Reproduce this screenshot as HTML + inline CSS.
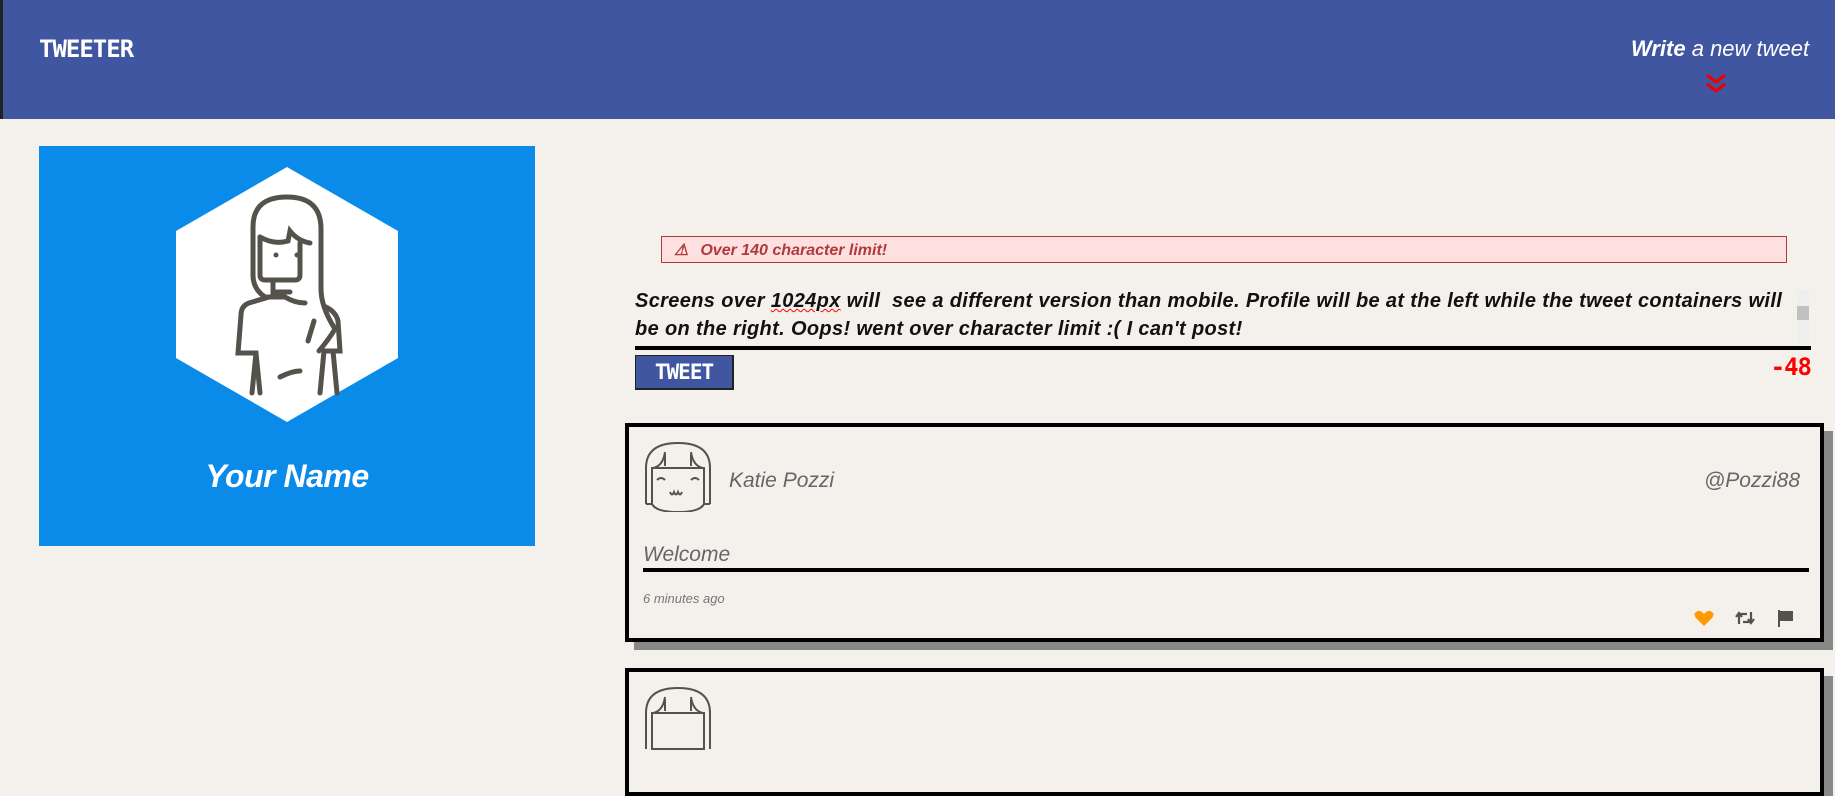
<!DOCTYPE html>
<html><head><meta charset="utf-8"><style>
body{margin:0;width:1835px;height:715px;overflow:hidden;background:#f4f1ec;position:relative;font-family:"Liberation Sans",sans-serif}
.a{position:absolute}
.hdr{left:0;top:0;width:1835px;height:119px;background:#4056a1;border-left:3px solid #222;box-sizing:border-box}
.logo{left:39px;top:35px;color:#fff;font:bold 24px "DejaVu Sans Mono","Liberation Mono",monospace;letter-spacing:-1px}
.write{left:1631px;top:36px;color:#fff;font:italic 22px "Liberation Sans",sans-serif}
.prof{left:39px;top:146px;width:496px;height:400px;background:#0a8be9}
.name{left:39px;top:458px;width:496px;text-align:center;color:#fff;font:italic bold 32px "Liberation Sans",sans-serif;letter-spacing:-0.5px}
.alert{left:661px;top:236px;width:1124px;height:25px;background:#ffe0e1;border:1px solid #b03a3a;color:#b03a3a;font:italic bold 16px "Liberation Sans",sans-serif}
.ta{left:635px;top:287px;width:1168px;color:#111;font:italic bold 20px/28px "Liberation Sans",sans-serif;letter-spacing:0.35px}
.btn{left:635px;top:355px;width:96px;height:32px;background:#4056a1;border:1px solid #222;border-bottom-width:2px;border-right-width:2px;color:#fff;font:bold 21px "DejaVu Sans Mono",monospace;text-align:center;line-height:32px;letter-spacing:-1px}
.card{left:625px;width:1191px;border:4px solid #000;background:#f4f1ec;box-shadow:9px 8px 0 #888}
</style></head><body>
<div class="a hdr"></div>
<div class="a logo">TWEETER</div>
<div class="a write"><b>Write</b> a new tweet</div>
<svg class="a" style="left:1704px;top:72px" width="24" height="24" viewBox="0 0 24 24"><path d="M3 3l9 7 9-7M3 12l9 7 9-7" fill="none" stroke="#e00" stroke-width="3.2"/></svg>

<div class="a prof"></div>
<svg class="a" style="left:176px;top:167px" width="222" height="255" viewBox="0 0 222 255"><polygon points="111,0 222,64 222,191 111,255 0,191 0,64" fill="#fff"/>
<g fill="none" stroke="#55524c" stroke-width="5" stroke-linecap="round">
<path d="M77 108V60q0-30 34-30q34 0 34 32v60q0 18 14 40q-6 10-16 22"/>
<path d="M77 108q0 14 12 22h20q10 6 20 6"/>
<path d="M84 70q14 8 28 4l2-10q8 10 20 12"/>
<path d="M84 70v38q0 5 5 5h30q5 0 5-5V76"/>
<path d="M97 113v12h17"/>
<path d="M93 130l-20 6q-8 3-8 12l-3 38h18l4 40M80 186l-4 40"/>
<path d="M150 140q10 5 12 14l2 30h-16l-4 42M157 184l4 42"/>
<path d="M138 154l-6 20"/>
<path d="M104 210q12-6 20-6"/>
</g>
<circle cx="100" cy="88" r="2.5" fill="#55524c"/><circle cx="121" cy="88" r="2.5" fill="#55524c"/></svg>
<div class="a name">Your Name</div>

<div class="a alert"><span style="position:relative;left:12px;top:3px">⚠</span><span style="position:relative;left:24px;top:3px">Over 140 character limit!</span></div>
<div class="a ta">Screens over <u style="text-decoration:underline wavy red 1px">1024px</u> will &nbsp;see a different version than mobile. Profile will be at the left while the tweet containers will be on the right. Oops! went over character limit :( I can't post!</div>
<div class="a" style="left:1797px;top:290px;width:12px;height:55px;background:#eee"><div style="margin-top:16px;height:14px;background:#c1c1c1"></div></div>
<div class="a" style="left:635px;top:346px;width:1176px;height:4px;background:#000"></div>
<div class="a btn">TWEET</div>
<div class="a" style="left:1740px;top:353px;width:71px;text-align:right;color:#f00;font:bold 24px 'DejaVu Sans Mono',monospace;letter-spacing:-1px">-48</div>

<div class="a card" style="top:423px;height:211px">
<svg class="a" style="left:14px;top:13px" width="70" height="72" viewBox="0 0 70 72" fill="none" stroke="#55524c" stroke-width="2"><path d="M3 64V28Q3 3 35 3Q67 3 67 28V64"/><path d="M3 64h6"/><path d="M67 64h-6"/><path d="M9 28v36q4 8 26 8q22 0 26-8V28H9z"/><path d="M10 28q10-2 12-16M22 26V14M48 26V14M48 12q2 14 12 16"/><path d="M14 40q4-4 8 0M48 40q4-4 8 0M27 52q2 5 4 0q2 5 4 0q2 5 4 0"/></svg>
<div class="a" style="left:100px;top:42px;color:#666;font:italic 300 21px 'Liberation Sans',sans-serif">Katie Pozzi</div>
<div class="a" style="right:20px;top:42px;color:#666;font:italic 300 21px 'Liberation Sans',sans-serif">@Pozzi88</div>
<div class="a" style="left:14px;top:116px;color:#666;font:italic 300 21px 'Liberation Sans',sans-serif">Welcome</div>
<div class="a" style="left:14px;top:141px;width:1166px;height:4px;background:#000"></div>
<div class="a" style="left:14px;top:164px;color:#777;font:italic 13px 'Liberation Sans',sans-serif">6 minutes ago</div>
<svg class="a" style="left:1065px;top:183px" width="20" height="16" viewBox="0 0 20 16"><path d="M10 16L2 8Q-1 4 2 2Q6-1 10 4Q14-1 18 2Q21 4 18 8z" fill="#f90"/></svg>
<svg class="a" style="left:1106px;top:183px" width="20" height="16" viewBox="0 0 20 16" fill="none" stroke="#55524c" stroke-width="2.2"><path d="M4 14V4h8M1 7l3-4 3 4M16 2v10H8M13 9l3 4 3-4"/></svg>
<svg class="a" style="left:1148px;top:182px" width="18" height="18" viewBox="0 0 18 18"><path d="M2 1v17" stroke="#55524c" stroke-width="2"/><path d="M3 2h13v10H3z" fill="#55524c"/></svg>
</div>

<div class="a card" style="top:668px;height:120px">
<svg class="a" style="left:14px;top:13px" width="70" height="72" viewBox="0 0 70 72" fill="none" stroke="#55524c" stroke-width="2"><path d="M3 64V28Q3 3 35 3Q67 3 67 28V64"/><path d="M9 28v36H61V28H9z"/><path d="M10 28q10-2 12-16M22 26V14M48 26V14M48 12q2 14 12 16"/></svg>
</div>
</body></html>
